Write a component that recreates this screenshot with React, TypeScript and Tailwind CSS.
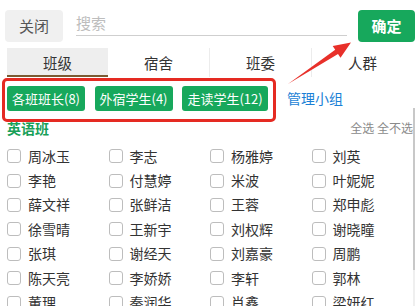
import { useState } from 'react';

const tabs = ['班级', '宿舍', '班委', '人群'];

const groups = [
  { label: '各班班长(8)', w: 'w-[78px]' },
  { label: '外宿学生(4)', w: 'w-[78px]' },
  { label: '走读学生(12)', w: 'w-[86px]' },
];

const names = [
  '周冰玉', '李志', '杨雅婷', '刘英',
  '李艳', '付慧婷', '米波', '叶妮妮',
  '薛文祥', '张鲜洁', '王蓉', '郑申彪',
  '徐雪晴', '王新宇', '刘权辉', '谢晓瞳',
  '张琪', '谢经天', '刘嘉豪', '周鹏',
  '陈天亮', '李娇娇', '李轩', '郭林',
  '董理', '秦润华', '肖鑫', '梁妍红',
];

export default function App() {
  const [active, setActive] = useState(0);
  const [checked, setChecked] = useState<Record<string, boolean>>({});

  return (
    <div className="relative w-[420px] h-[306px] overflow-hidden bg-white font-['Noto_Sans_CJK_SC','Liberation_Sans',sans-serif] text-[#333]">
      {/* top bar */}
      <div className="flex items-start pt-[10px]">
        <button className="ml-[5px] w-[58px] h-[32px] rounded-[4px] bg-[#f0f0f0] text-[15px] text-[#555] leading-[32px]">
          关闭
        </button>
        <div className="ml-[13px] flex-1 h-[26px] border-b border-[#cfcfcf]">
          <input
            placeholder="搜索"
            className="w-full h-full bg-transparent text-[15px] leading-[26px] outline-none placeholder-[#bdbdbd]"
          />
        </div>
        <button className="ml-[11px] mr-[5px] w-[57px] h-[32px] rounded-[4px] bg-[#17a85c] text-[15px] font-bold text-white leading-[32px]">
          确定
        </button>
      </div>

      {/* tabs */}
      <div className="mt-[6px] mx-[7px] flex h-[29px]">
        {tabs.map((t, i) => (
          <button
            key={t}
            onClick={() => setActive(i)}
            className={`flex-1 text-[14.5px] leading-[29px] ${
              active === i ? 'bg-[#eeeeee] border-b-2 border-[#7b5a32]' : ''
            } ${i > 1 ? 'border-l border-[#ececec]' : ''}`}
          >
            {t}
          </button>
        ))}
      </div>

      {/* quick groups */}
      <div className="mt-[9px] pl-[7px] flex items-center h-[25px]">
        <div className="flex gap-[9.5px]">
          {groups.map((g) => (
            <button
              key={g.label}
              className={`${g.w} h-[25px] rounded-[3px] bg-[#17a85c] text-white text-[13px] leading-[25px]`}
            >
              {g.label}
            </button>
          ))}
        </div>
        <a className="ml-[19px] text-[14px] text-[#1a7fd6]">管理小组</a>
      </div>

      {/* class header */}
      <div className="mt-[9px] h-[16px] flex items-center justify-between pl-[7px] pr-[7px]">
        <span className="text-[14px] font-bold text-[#18a058] leading-[16px]">英语班</span>
        <span className="text-[12px] text-[#8a8a8a] leading-[16px]">全选 全不选</span>
      </div>

      {/* names */}
      <div className="mt-[8px] ml-[7px] w-[406px] grid grid-cols-4">
        {names.map((n) => (
          <label
            key={n}
            className="h-[24.4px] flex items-center gap-[7px] text-[14px] cursor-pointer"
            onClick={() => setChecked((c) => ({ ...c, [n]: !c[n] }))}
          >
            <span
              className={`w-[14px] h-[14px] rounded-[3px] border ${
                checked[n] ? 'bg-[#17a85c] border-[#17a85c]' : 'border-[#bdbdbd]'
              }`}
            />
            {n}
          </label>
        ))}
      </div>

      {/* scrollbar */}
      <div className="absolute left-[413px] top-[108px] w-[2px] h-[162px] bg-[#c8c8c8]" />
      <div className="absolute left-[413px] top-[270px] w-[2px] h-[36px] bg-[#efefef]" />

      {/* annotation */}
      <div className="absolute left-[2px] top-[78px] w-[274px] h-[44px] border-[3px] border-[#e52a22] rounded-[5px] pointer-events-none" />
      <svg className="absolute inset-0 pointer-events-none" width="420" height="306">
        <polygon
          points="288,84 338,54 340.5,57.8 351,42.5 332.7,46 335.2,49.8"
          fill="#e8302a"
        />
      </svg>
    </div>
  );
}
